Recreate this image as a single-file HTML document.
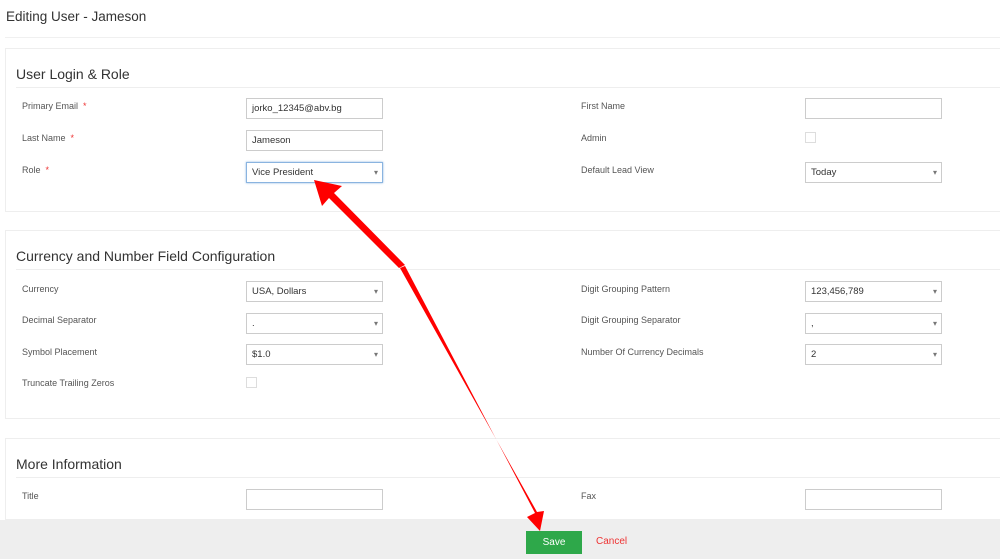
<!DOCTYPE html>
<html><head><style>
html,body{margin:0;width:1000px;height:559px;overflow:hidden}
body{background:#fff;font-family:"Liberation Sans",sans-serif;position:relative}
.a{position:absolute}
.h1{left:6px;top:9px;font-size:13.5px;color:#333}
.panel{position:absolute;left:5px;width:1000px;border:1px solid #eee;background:#fff;box-sizing:border-box}
.ph{position:absolute;left:10px;font-size:14px;color:#333}
.hl{position:absolute;left:10px;right:0;border-top:1px solid #eee}
.lb{position:absolute;font-size:9px;color:#555}
.lb i{color:#e33;font-style:normal;margin-left:5px}
.in{position:absolute;border:1px solid #ccc;font-size:9.5px;color:#333;line-height:20px;padding-left:5px;box-sizing:border-box;width:137px;height:21px}
.in.s:after{content:"▾";position:absolute;right:4px;top:0;font-size:8px;color:#777}
.cb{position:absolute;width:9px;height:9px;border:1px solid #ddd}
</style></head><body>
<div class="a h1">Editing User - Jameson</div>
<div class="a" style="left:5px;right:0;top:37px;border-top:1px solid #f0f0f0"></div>

<div class="panel" style="top:48px;height:164px">
<div class="ph" style="top:17px">User Login &amp; Role</div><div class="hl" style="top:38px"></div></div>
<div class="lb" style="left:22px;top:101px">Primary Email<i>*</i></div>
<div class="in" style="left:246px;top:98px">jorko_12345@abv.bg</div>
<div class="lb" style="left:22px;top:133px">Last Name<i>*</i></div>
<div class="in" style="left:246px;top:130px">Jameson</div>
<div class="lb" style="left:22px;top:165px">Role<i>*</i></div>
<div class="in s" style="left:246px;top:162px;border-color:#8ab4e0;box-shadow:0 0 2px #8ab4e0">Vice President</div>
<div class="lb" style="left:581px;top:101px">First Name</div>
<div class="in" style="left:805px;top:98px"></div>
<div class="lb" style="left:581px;top:133px">Admin</div>
<div class="cb" style="left:805px;top:132px"></div>
<div class="lb" style="left:581px;top:165px">Default Lead View</div>
<div class="in s" style="left:805px;top:162px">Today</div>

<div class="panel" style="top:230px;height:189px">
<div class="ph" style="top:17px">Currency and Number Field Configuration</div><div class="hl" style="top:38px"></div></div>
<div class="lb" style="left:22px;top:284px">Currency</div>
<div class="in s" style="left:246px;top:281px">USA, Dollars</div>
<div class="lb" style="left:22px;top:315px">Decimal Separator</div>
<div class="in s" style="left:246px;top:313px">.</div>
<div class="lb" style="left:22px;top:347px">Symbol Placement</div>
<div class="in s" style="left:246px;top:344px">$1.0</div>
<div class="lb" style="left:22px;top:378px">Truncate Trailing Zeros</div>
<div class="cb" style="left:246px;top:377px"></div>
<div class="lb" style="left:581px;top:284px">Digit Grouping Pattern</div>
<div class="in s" style="left:805px;top:281px">123,456,789</div>
<div class="lb" style="left:581px;top:315px">Digit Grouping Separator</div>
<div class="in s" style="left:805px;top:313px">,</div>
<div class="lb" style="left:581px;top:347px">Number Of Currency Decimals</div>
<div class="in s" style="left:805px;top:344px">2</div>

<div class="panel" style="top:438px;height:82px">
<div class="ph" style="top:17px">More Information</div><div class="hl" style="top:38px"></div></div>
<div class="lb" style="left:22px;top:491px">Title</div>
<div class="in" style="left:246px;top:489px"></div>
<div class="lb" style="left:581px;top:491px">Fax</div>
<div class="in" style="left:805px;top:489px"></div>

<div class="a" style="left:0;right:0;top:520px;height:39px;background:#eee"></div>
<div class="a" style="left:526px;top:531px;width:56px;height:23px;background:#2ea84a;color:#fff;font-size:10px;text-align:center;line-height:24px">Save</div>
<div class="a" style="left:596px;top:536px;font-size:10px;color:#e33">Cancel</div>

<svg class="a" style="left:0;top:0" width="1000" height="559">
<g fill="#f00">
<polygon points="399,268 405,265 334,193 342,186 314,180 322,206 329,198"/>
<polygon points="400,268 405,266 535,513 527,517 540,531 544,511 537,512"/>
</g>
</svg>
</body></html>
